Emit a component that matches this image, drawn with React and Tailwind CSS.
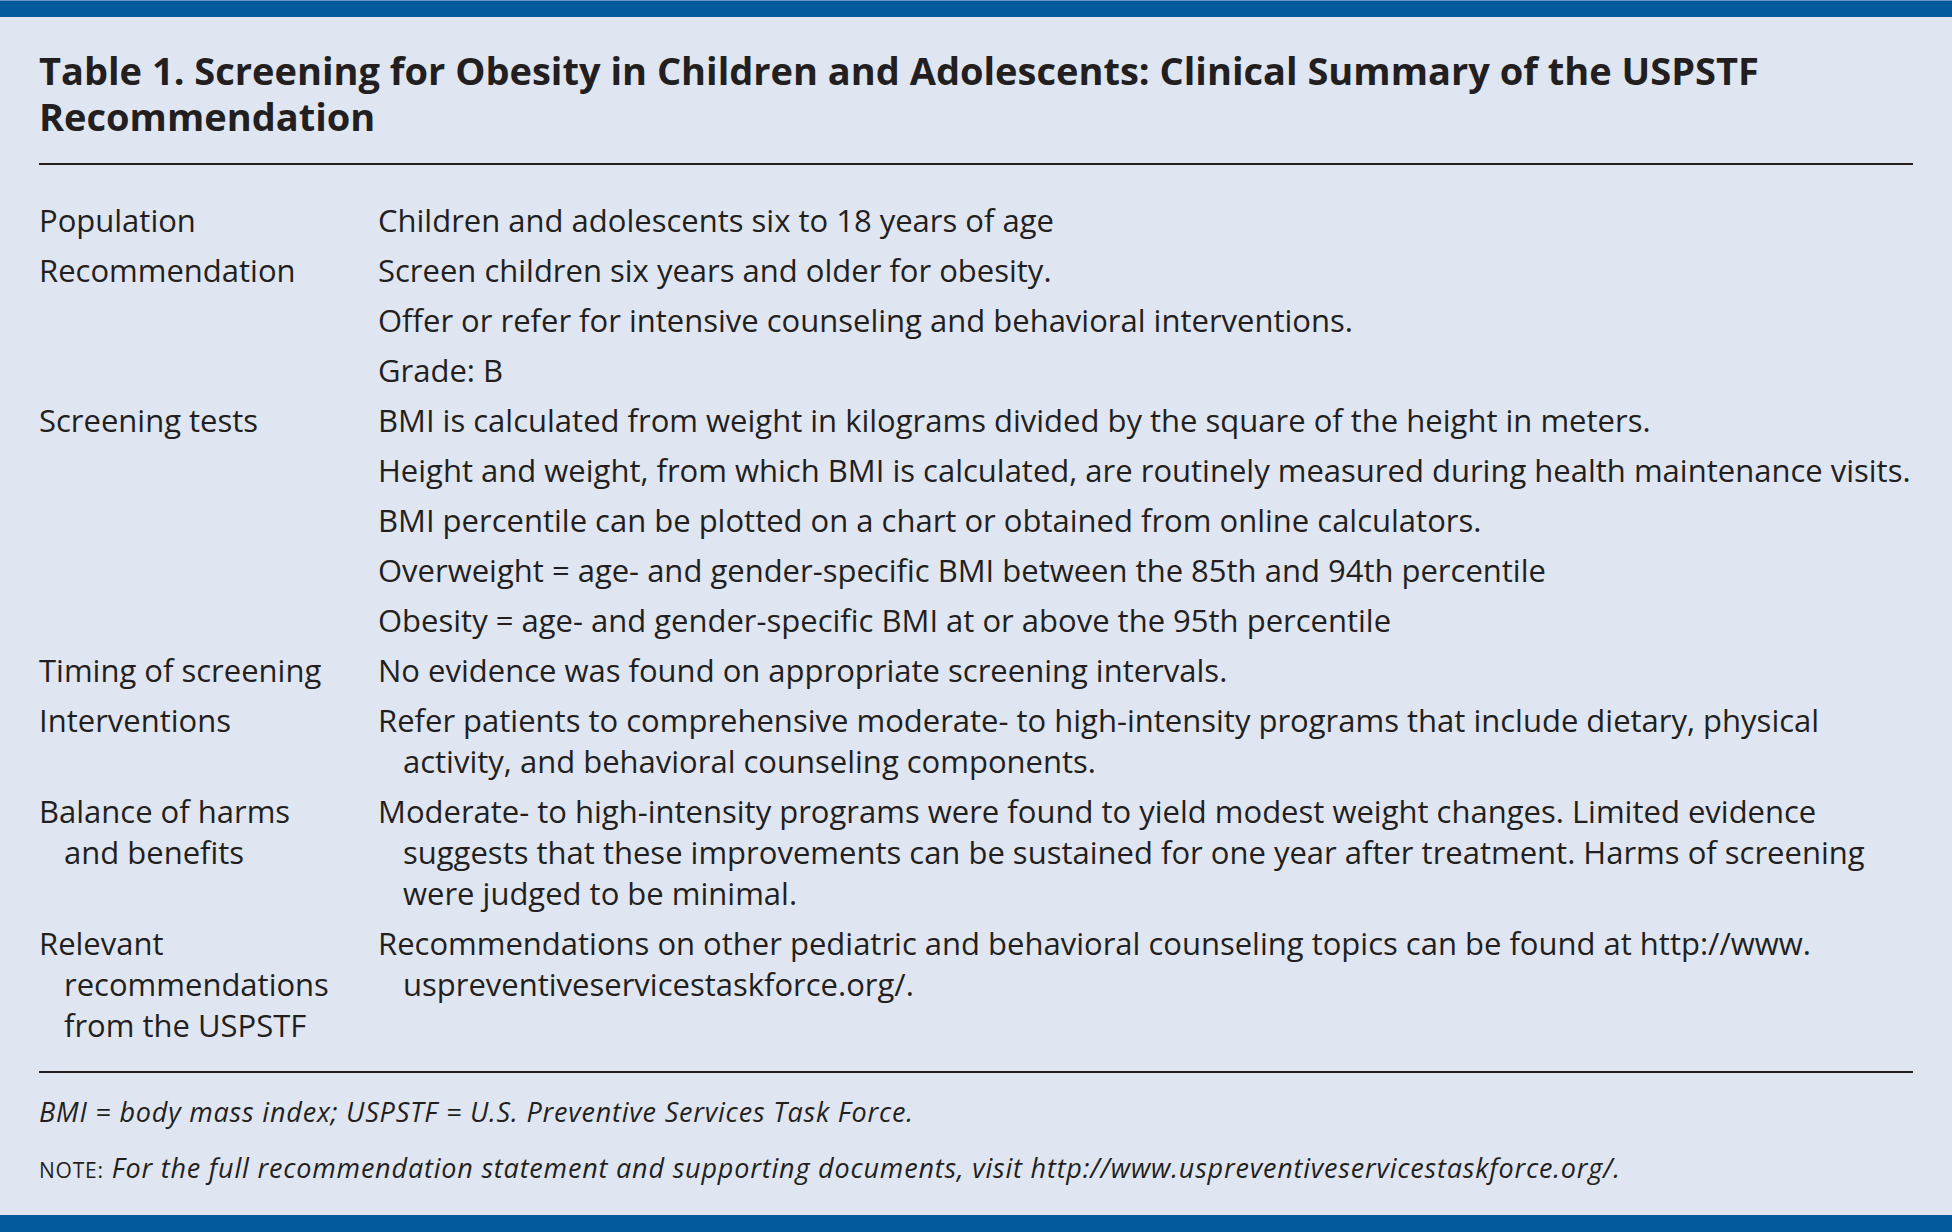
import React from "react";

const rows = [
  { label: ["Population"], paras: [["Children and adolescents six to 18 years of age"]] },
  {
    label: ["Recommendation"],
    paras: [
      ["Screen children six years and older for obesity."],
      ["Offer or refer for intensive counseling and behavioral interventions."],
      ["Grade: B"],
    ],
  },
  {
    label: ["Screening tests"],
    paras: [
      ["BMI is calculated from weight in kilograms divided by the square of the height in meters."],
      ["Height and weight, from which BMI is calculated, are routinely measured during health maintenance visits."],
      ["BMI percentile can be plotted on a chart or obtained from online calculators."],
      ["Overweight = age- and gender-specific BMI between the 85th and 94th percentile"],
      ["Obesity = age- and gender-specific BMI at or above the 95th percentile"],
    ],
  },
  { label: ["Timing of screening"], paras: [["No evidence was found on appropriate screening intervals."]] },
  {
    label: ["Interventions"],
    paras: [
      [
        "Refer patients to comprehensive moderate- to high-intensity programs that include dietary, physical",
        "activity, and behavioral counseling components.",
      ],
    ],
  },
  {
    label: ["Balance of harms", "and benefits"],
    paras: [
      [
        "Moderate- to high-intensity programs were found to yield modest weight changes. Limited evidence",
        "suggests that these improvements can be sustained for one year after treatment. Harms of screening",
        "were judged to be minimal.",
      ],
    ],
  },
  {
    label: ["Relevant", "recommendations", "from the USPSTF"],
    paras: [
      [
        "Recommendations on other pediatric and behavioral counseling topics can be found at http://www.",
        "uspreventiveservicestaskforce.org/.",
      ],
    ],
  },
];

function Lines({ lines }) {
  return (
    <div>
      {lines.map((l, i) => (
        <div key={i} className={i === 0 ? "whitespace-nowrap" : "whitespace-nowrap pl-[25px]"}>
          {l}
        </div>
      ))}
    </div>
  );
}

export default function App() {
  return (
    <div className="w-[1952px] h-[1232px] bg-[#dfe6f2] flex flex-col font-['Open_Sans',sans-serif] text-[#231f20]">
      <div className="h-[17px] bg-[#035a9c] border-t border-[#6d95c0]" />
      <div className="px-[39px]">
        <h1 className="mt-[30px] text-[38px] leading-[46px] font-bold">
          Table 1. Screening for Obesity in Children and Adolescents: Clinical Summary of the USPSTF
          <br />
          Recommendation
        </h1>
        <div className="mt-[24px] h-[2px] bg-[#231f20]" />
        <div className="mt-[35px] grid grid-cols-[339px_1fr] gap-y-[9px] text-[31px] leading-[41px]">
          {rows.map((r, i) => (
            <React.Fragment key={i}>
              <Lines lines={r.label} />
              <div className="flex flex-col gap-[9px]">
                {r.paras.map((p, j) => (
                  <Lines key={j} lines={p} />
                ))}
              </div>
            </React.Fragment>
          ))}
        </div>
        <div className="mt-[25px] h-[2px] bg-[#231f20]" />
        <p className="mt-[24px] text-[27px] leading-[30px] italic whitespace-nowrap tracking-[0.8px]">
          BMI = body mass index; USPSTF = U.S. Preventive Services Task Force.
        </p>
        <p className="mt-[26px] text-[27px] leading-[30px] whitespace-nowrap tracking-[0.8px]">
          <span className="text-[21px] not-italic">NOTE:</span>{" "}
          <span className="italic">
            For the full recommendation statement and supporting documents, visit
            http://www.uspreventiveservicestaskforce.org/.
          </span>
        </p>
      </div>
      <div className="mt-auto h-[17px] bg-[#035a9c]" />
    </div>
  );
}
